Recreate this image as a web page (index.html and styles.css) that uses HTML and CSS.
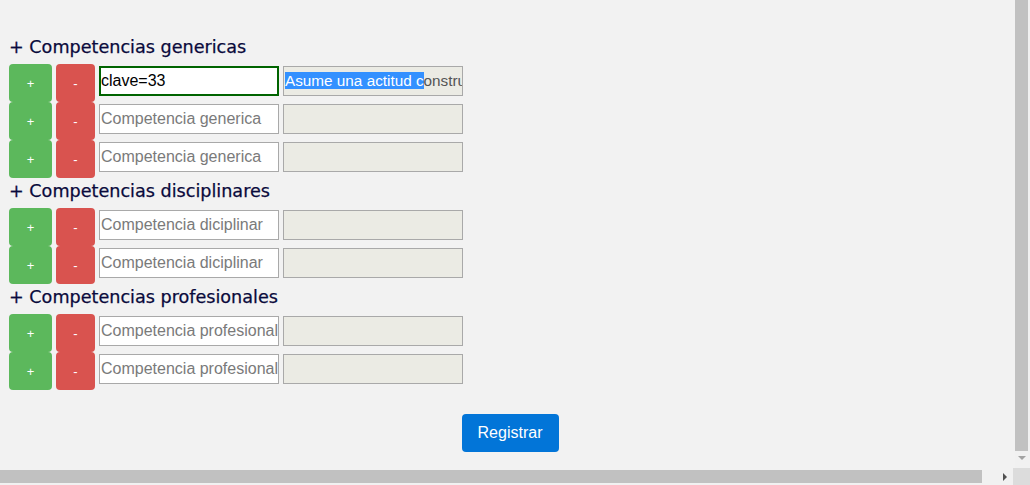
FILE: index.html
```html
<!DOCTYPE html>
<html lang="es">
<head>
<meta charset="utf-8">
<title>Competencias</title>
<link rel="stylesheet" href="styles.css">
</head>
<body>
<main class="page">
  <section class="group">
    <h2 class="group-title">+ Competencias genericas</h2>
    <div class="row">
      <button class="btn btn-add">+</button>
      <button class="btn btn-del">-</button>
      <input class="field field-focus" type="text" value="clave=33">
      <div class="field field-ro"><span class="sel">Asume una actitud c</span>onstructiva</div>
    </div>
    <div class="row">
      <button class="btn btn-add">+</button>
      <button class="btn btn-del">-</button>
      <input class="field" type="text" placeholder="Competencia generica">
      <div class="field field-ro"></div>
    </div>
    <div class="row">
      <button class="btn btn-add">+</button>
      <button class="btn btn-del">-</button>
      <input class="field" type="text" placeholder="Competencia generica">
      <div class="field field-ro"></div>
    </div>
  </section>
  <section class="group">
    <h2 class="group-title">+ Competencias disciplinares</h2>
    <div class="row">
      <button class="btn btn-add">+</button>
      <button class="btn btn-del">-</button>
      <input class="field" type="text" placeholder="Competencia diciplinar">
      <div class="field field-ro"></div>
    </div>
    <div class="row">
      <button class="btn btn-add">+</button>
      <button class="btn btn-del">-</button>
      <input class="field" type="text" placeholder="Competencia diciplinar">
      <div class="field field-ro"></div>
    </div>
  </section>
  <section class="group">
    <h2 class="group-title">+ Competencias profesionales</h2>
    <div class="row">
      <button class="btn btn-add">+</button>
      <button class="btn btn-del">-</button>
      <input class="field" type="text" placeholder="Competencia profesional">
      <div class="field field-ro"></div>
    </div>
    <div class="row">
      <button class="btn btn-add">+</button>
      <button class="btn btn-del">-</button>
      <input class="field" type="text" placeholder="Competencia profesional">
      <div class="field field-ro"></div>
    </div>
  </section>
  <div class="actions">
    <button class="btn-submit">Registrar</button>
  </div>
</main>
<div class="vscroll"><div class="vthumb"></div><div class="arrow-down"></div></div>
<div class="hscroll"><div class="hthumb"></div><div class="arrow-right"></div></div>
<div class="corner"></div>
</body>
</html>
```
FILE: styles.css
```css
html, body {
  margin: 0;
  padding: 0;
  background: #f2f2f2;
  overflow: hidden;
}
.page {
  width: 1015px;
  padding: 34px 0 0 9px;
  box-sizing: border-box;
}
.group-title {
  margin: 0;
  height: 30px;
  line-height: 27px;
  font-family: "DejaVu Sans", "Noto Sans", sans-serif;
  font-weight: 400;
  font-size: 17.6px;
  color: #0a0a3c;
  -webkit-text-stroke: 0.25px #0a0a3c;
  padding-left: 0;
}
.row {
  display: flex;
  align-items: flex-start;
  height: 38px;
}
.btn {
  height: 38px;
  border: none;
  border-radius: 4px;
  color: #fff;
  font-family: "Liberation Sans", Arial, sans-serif;
  font-size: 13px;
  padding: 0;
  margin: 0;
}
.btn-add {
  width: 43px;
  background: #5cb85c;
}
.btn-del {
  width: 39px;
  margin-left: 4px;
  background: #d9534f;
}
.field {
  box-sizing: border-box;
  width: 180px;
  height: 30px;
  margin: 2px 0 0 4px;
  border: 1px solid #a9a9a9;
  background: #fff;
  font-family: "Liberation Sans", Arial, sans-serif;
  font-size: 16px;
  color: #000;
  padding: 0 0 0 1px;
  outline: none;
}
.field::placeholder {
  color: #7a7a7a;
}
.field-focus {
  border: 2px solid #006400;
  padding: 0;
}
.field-ro {
  background: #ebebe4;
  color: #545454;
  font-size: 15.3px;
  line-height: 28px;
  padding-left: 1px;
  white-space: nowrap;
  overflow: hidden;
}
.sel {
  background: #3390ff;
  color: #fff;
}
.actions {
  display: flex;
  justify-content: center;
  padding: 24px 0 0 0;
  width: 1002px;
}
.btn-submit {
  width: 97px;
  height: 38px;
  border: none;
  border-radius: 4px;
  background: #0275d8;
  color: #fff;
  font-family: "Liberation Sans", Arial, sans-serif;
  font-size: 16px;
}
.vscroll {
  position: fixed;
  top: 0;
  right: 0;
  width: 15px;
  height: 470px;
  background: #f1f1f1;
}
.vthumb {
  width: 13px;
  height: 451px;
  background: #c1c1c1;
}
.arrow-down {
  position: absolute;
  left: 3px;
  top: 456px;
  width: 0;
  height: 0;
  border-left: 4px solid transparent;
  border-right: 4px solid transparent;
  border-top: 4px solid #a3a3a3;
}
.hscroll {
  position: fixed;
  left: 0;
  bottom: 0;
  width: 1015px;
  height: 15px;
  background: #f1f1f1;
}
.hthumb {
  width: 982px;
  height: 13px;
  background: #c1c1c1;
}
.arrow-right {
  position: absolute;
  left: 1003px;
  top: 3px;
  width: 0;
  height: 0;
  border-top: 4px solid transparent;
  border-bottom: 4px solid transparent;
  border-left: 4px solid #505050;
}
.corner {
  position: fixed;
  right: 0;
  bottom: 0;
  width: 17px;
  height: 17px;
  background: #dcdcdc;
}
```
